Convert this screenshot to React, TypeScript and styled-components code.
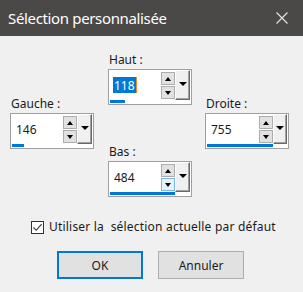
import React from "react";
import styled, { createGlobalStyle } from "styled-components";

const GlobalStyle = createGlobalStyle`
  html, body {
    margin: 0;
    padding: 0;
    background: #f0f0f0;
  }
  body {
    font-family: "Noto Sans", "DejaVu Sans", sans-serif;
    color: #1b1b1b;
  }
`;

type SpinField = {
  label: string;
  value: string;
  bar: number;
  selected?: boolean;
  hoverDown?: boolean;
};

const fields: Record<string, SpinField> = {
  haut: { label: "Haut :", value: "118", bar: 15, selected: true },
  gauche: { label: "Gauche :", value: "146", bar: 12 },
  droite: { label: "Droite :", value: "755", bar: 66 },
  bas: { label: "Bas :", value: "484", bar: 65, hoverDown: true },
};

function Spinner({ field }: { field: SpinField }) {
  return (
    <Group>
      <Label>{field.label}</Label>
      <SpinBox>
        <SpinMain>
          <SpinRow>
            <ValueArea>
              {field.selected ? (
                <Selected>
                  {field.value}
                  <Caret />
                </Selected>
              ) : (
                field.value
              )}
            </ValueArea>
            <Arrows>
              <ArrowButton>
                <Tri $dir="up" />
              </ArrowButton>
              <ArrowButton $hover={field.hoverDown}>
                <Tri $dir="down" />
              </ArrowButton>
            </Arrows>
          </SpinRow>
          <Track>
            <Fill style={{ width: field.bar }} />
          </Track>
        </SpinMain>
        <DropButton>
          <BigTri />
        </DropButton>
      </SpinBox>
    </Group>
  );
}

export default function App() {
  return (
    <>
      <GlobalStyle />
      <Dialog>
        <TitleBar>
          <Title>Sélection personnalisée</Title>
          <CloseIcon viewBox="0 0 12 12">
            <path d="M0.5 0.5 L11.5 11.5 M11.5 0.5 L0.5 11.5" />
          </CloseIcon>
        </TitleBar>
        <Body>
          <Fields>
            <SideColumn>
              <Spinner field={fields.gauche} />
            </SideColumn>
            <CenterColumn>
              <Spinner field={fields.haut} />
              <Spinner field={fields.bas} />
            </CenterColumn>
            <SideColumn $right>
              <Spinner field={fields.droite} />
            </SideColumn>
          </Fields>
          <CheckRow>
            <CheckBox>
              <svg viewBox="0 0 11 11" width="11" height="11">
                <path d="M1.5 5.5 L4.2 8.3 L9.6 2.2" fill="none" stroke="#333" strokeWidth="1.1" />
              </svg>
            </CheckBox>
            <CheckText>Utiliser la&nbsp; sélection actuelle par défaut</CheckText>
          </CheckRow>
          <Buttons>
            <DialogButton $primary>OK</DialogButton>
            <DialogButton>Annuler</DialogButton>
          </Buttons>
        </Body>
      </Dialog>
    </>
  );
}

const Dialog = styled.div`
  width: 303px;
  height: 292px;
  display: flex;
  flex-direction: column;
  background: #f0f0f0;
  overflow: hidden;
`;

const TitleBar = styled.div`
  height: 36px;
  flex: none;
  background: #4b4947;
  display: flex;
  align-items: center;
  justify-content: space-between;
  padding: 0 15px 0 8px;
  box-sizing: border-box;
`;

const Title = styled.div`
  color: #ffffff;
  font-size: 15px;
  line-height: 20px;
  letter-spacing: -0.35px;
`;

const CloseIcon = styled.svg`
  width: 12px;
  height: 12px;
  stroke: #e8e8e8;
  stroke-width: 1.1;
  fill: none;
`;

const Body = styled.div`
  display: flex;
  flex-direction: column;
  padding-top: 16px;
`;

const Fields = styled.div`
  display: flex;
  padding-left: 10px;
`;

const SideColumn = styled.div<{ $right?: boolean }>`
  width: 84px;
  margin-top: 44px;
  margin-left: ${({ $right }) => ($right ? "13px" : "0")};
  margin-right: ${({ $right }) => ($right ? "0" : "14px")};
`;

const CenterColumn = styled.div`
  width: 84px;
  display: flex;
  flex-direction: column;
  gap: 39px;
`;

const Group = styled.div`
  display: flex;
  flex-direction: column;
`;

const Label = styled.div`
  font-size: 12px;
  line-height: 16px;
  margin: 0 0 1px 1px;
  color: #1b1b1b;
`;

const SpinBox = styled.div`
  height: 36px;
  box-sizing: border-box;
  border: 1px solid #a0a0a0;
  background: #ffffff;
  display: flex;
  padding-right: 1px;
`;

const SpinMain = styled.div`
  flex: 1;
  display: flex;
  flex-direction: column;
`;

const SpinRow = styled.div`
  height: 30px;
  display: flex;
`;

const ValueArea = styled.div`
  flex: 1;
  display: flex;
  align-items: center;
  padding-left: 5px;
  font-size: 12px;
  color: #1b1b1b;
`;

const Selected = styled.span`
  display: inline-flex;
  align-items: center;
  height: 16px;
  background: #0078d7;
  color: #ffffff;
  padding-left: 1px;
  margin-left: -1px;
`;

const Caret = styled.span`
  display: inline-block;
  width: 1px;
  height: 16px;
  background: #f08a24;
  margin-left: 1px;
`;

const Arrows = styled.div`
  width: 14px;
  display: flex;
  flex-direction: column;
  gap: 1px;
  padding-top: 2px;
`;

const ArrowButton = styled.div<{ $hover?: boolean }>`
  height: 13px;
  box-sizing: border-box;
  border: 1px solid ${({ $hover }) => ($hover ? "#7ab4ea" : "#adadad")};
  background: ${({ $hover }) => ($hover ? "#e5f1fb" : "#e1e1e1")};
  display: flex;
  align-items: center;
  justify-content: center;
`;

const Tri = styled.span<{ $dir: "up" | "down" }>`
  width: 0;
  height: 0;
  border-left: 3.5px solid transparent;
  border-right: 3.5px solid transparent;
  ${({ $dir }) =>
    $dir === "up"
      ? "border-bottom: 4px solid #000;"
      : "border-top: 4px solid #000;"}
`;

const Track = styled.div`
  height: 3px;
  margin: 0 0 1px 1px;
  background: #ffffff;
`;

const Fill = styled.div`
  height: 3px;
  background: #0078d7;
`;

const DropButton = styled.div`
  width: 15px;
  height: 30px;
  box-sizing: border-box;
  background: #f0f0f0;
  border-top: 1px solid #ffffff;
  border-left: 1px solid #ffffff;
  border-right: 1px solid #696969;
  border-bottom: 1px solid #696969;
  box-shadow: inset -1px -1px 0 #a0a0a0;
  display: flex;
  align-items: center;
  justify-content: center;
  padding-bottom: 2px;
`;

const BigTri = styled.span`
  width: 0;
  height: 0;
  border-left: 4px solid transparent;
  border-right: 4px solid transparent;
  border-top: 4px solid #000;
`;

const CheckRow = styled.div`
  display: flex;
  align-items: center;
  margin-top: 22px;
  padding-left: 31px;
  height: 16px;
`;

const CheckBox = styled.div`
  width: 13px;
  height: 13px;
  box-sizing: border-box;
  border: 1px solid #333333;
  background: #ffffff;
  display: flex;
  align-items: center;
  justify-content: center;
  margin-right: 5px;
`;

const CheckText = styled.span`
  font-size: 12px;
  line-height: 16px;
  letter-spacing: 0.2px;
  color: #1b1b1b;
  white-space: pre;
`;

const Buttons = styled.div`
  display: flex;
  gap: 15px;
  margin-top: 16px;
  padding-left: 57px;
`;

const DialogButton = styled.div<{ $primary?: boolean }>`
  width: 86px;
  height: 28px;
  box-sizing: border-box;
  background: #e1e1e1;
  border: ${({ $primary }) => ($primary ? "2px solid #0078d7" : "1px solid #adadad")};
  display: flex;
  align-items: center;
  justify-content: center;
  font-size: 12px;
  color: #1b1b1b;
`;
